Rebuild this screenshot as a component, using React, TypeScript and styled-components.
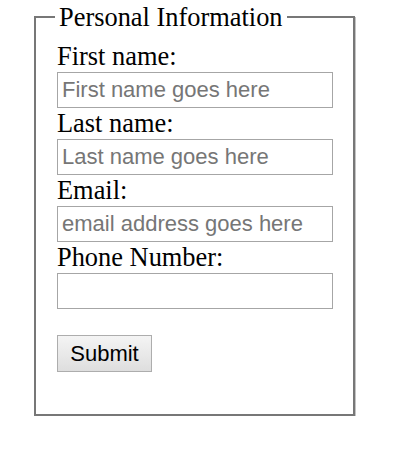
import styled, { createGlobalStyle } from "styled-components";

const GlobalStyle = createGlobalStyle`
  html, body {
    margin: 0;
    padding: 0;
    background: #fff;
  }
`;

const fields = [
  { label: "First name:", placeholder: "First name goes here", type: "text" },
  { label: "Last name:", placeholder: "Last name goes here", type: "text" },
  { label: "Email:", placeholder: "email address goes here", type: "email" },
  { label: "Phone Number:", placeholder: "", type: "tel" },
];

const App = () => {
  return (
    <Page>
      <GlobalStyle />
      <form onSubmit={(e) => e.preventDefault()}>
        <Box>
          <Legend>Personal Information</Legend>
          {fields.map((f) => (
            <Field key={f.label}>
              <Label>{f.label}</Label>
              <Input type={f.type} placeholder={f.placeholder} />
            </Field>
          ))}
          <Button type="submit">Submit</Button>
        </Box>
      </form>
    </Page>
  );
};

export default App;

const Page = styled.div`
  padding: 2px 0 0 34px;
  font-family: "Liberation Serif", "Times New Roman", serif;
`;

const Box = styled.fieldset`
  width: 320px;
  box-sizing: border-box;
  margin: 0;
  padding: 9px 20px 42px 21px;
  border: 2px solid #777;
  box-shadow: 1px 1px 0 #c4c4c4;
  display: flex;
  flex-direction: column;
  align-items: flex-start;
`;

const Legend = styled.legend`
  font-size: 26.4px;
  line-height: 30px;
  padding: 0 4px;
  margin-left: -2px;
  color: #000;
`;

const Field = styled.div`
  display: flex;
  flex-direction: column;
  width: 100%;
`;

const Label = styled.label`
  display: block;
  font-size: 26.4px;
  line-height: 31px;
  color: #000;
`;

const Input = styled.input`
  box-sizing: border-box;
  width: 276px;
  height: 36px;
  margin: 0;
  padding: 0 4px;
  border: 1px solid #a6a6a6;
  font-family: "Liberation Sans", Arial, sans-serif;
  font-size: 22px;
  color: #000;
  background: #fff;
  outline: none;

  &::placeholder {
    color: #767676;
  }
`;

const Button = styled.button`
  box-sizing: border-box;
  margin-top: 26px;
  width: 95px;
  height: 37px;
  padding: 0;
  border: 1px solid #adadad;
  background: linear-gradient(#f4f4f4, #dedede);
  font-family: "Liberation Sans", Arial, sans-serif;
  font-size: 22px;
  color: #000;
  cursor: pointer;
`;
